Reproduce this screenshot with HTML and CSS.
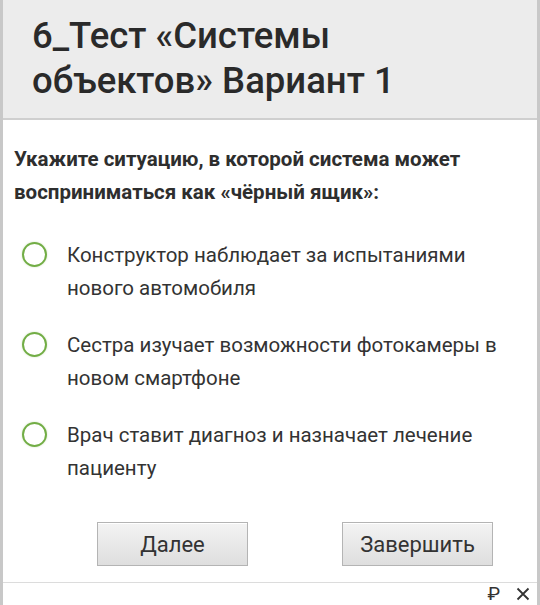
FILE: index.html
```html
<!DOCTYPE html>
<html lang="ru">
<head>
<meta charset="utf-8">
<link rel="stylesheet" href="styles.css">
</head>
<body>
<div class="page">
  <header class="header">
    <h1 class="title">6_Тест «Системы объектов» Вариант 1</h1>
  </header>
  <main class="content">
    <p class="question">Укажите ситуацию, в которой система может восприниматься как «чёрный ящик»:</p>
    <ul class="options">
      <li class="option"><span class="radio"></span><span class="opt-text">Конструктор наблюдает за испытаниями нового автомобиля</span></li>
      <li class="option"><span class="radio"></span><span class="opt-text">Сестра изучает возможности фотокамеры в новом смартфоне</span></li>
      <li class="option"><span class="radio"></span><span class="opt-text">Врач ставит диагноз и назначает лечение пациенту</span></li>
    </ul>
    <div class="buttons">
      <button class="btn">Далее</button>
      <button class="btn">Завершить</button>
    </div>
  </main>
  <footer class="adbar">
    <span class="ad-icon">₽</span>
    <svg class="close" width="14" height="14" viewBox="0 0 14 14"><path d="M1.5 1.5L12.5 12.5M12.5 1.5L1.5 12.5" stroke="#333" stroke-width="1.8" fill="none"/></svg>
  </footer>
</div>
</body>
</html>
```

FILE: styles.css
```css
html, body {
  margin: 0;
  padding: 0;
  background: #fff;
  height: 100%;
  overflow: hidden;
}
.page {
  border-left: 3px solid #c8c8c8;
  border-right: 3px solid #c8c8c8;
  height: 605px;
  box-sizing: border-box;
  font-family: Roboto, "Noto Sans", sans-serif;
  color: #2e2e2e;
  display: flex;
  flex-direction: column;
}
.header {
  background: #ececec;
  border-bottom: 2px solid #cfcfcf;
  height: 120px;
  box-sizing: border-box;
  padding: 13px 20px 0 29px;
}
.title {
  margin: 0;
  font-size: 36.5px;
  font-weight: 500;
  line-height: 45px;
  color: #2a2a2a;
}
.content {
  padding: 23px 11px 0 11px;
  flex: 1;
}
.question {
  margin: 0;
  font-size: 20.5px;
  font-weight: 700;
  line-height: 33px;
  color: #2e2e2e;
}
.options {
  list-style: none;
  margin: 30px 0 0 0;
  padding: 0 10px 0 0;
  display: flex;
  flex-direction: column;
  gap: 24px;
}
.option {
  display: flex;
  align-items: flex-start;
}
.radio {
  flex: none;
  width: 21px;
  height: 21px;
  border: 2.5px solid #72ad45;
  border-radius: 50%;
  margin: 3px 0 0 8px;
  box-shadow: 0 0 2px rgba(114, 173, 69, 0.35);
}
.opt-text {
  margin-left: 20px;
  font-size: 20.5px;
  line-height: 33px;
  color: #333;
}
.buttons {
  display: flex;
  justify-content: space-between;
  padding: 0 33px 0 83px;
  margin-top: 37px;
}
.btn {
  width: 151px;
  height: 44px;
  font-family: Roboto, "Noto Sans", sans-serif;
  font-size: 22px;
  color: #333;
  background: linear-gradient(#f3f3f3, #dedede);
  border: 1.5px solid #b4b4b4;
  border-radius: 0;
  box-shadow: inset 0 1px 0 #fff;
  padding: 0;
}
.adbar {
  border-top: 1px solid #dcdcdc;
  height: 22px;
  display: flex;
  justify-content: flex-end;
  align-items: center;
  gap: 16px;
  padding: 0 7px 0 0;
}
.ad-icon {
  font-family: Roboto, "DejaVu Sans", sans-serif;
  font-size: 19px;
  color: #333;
  line-height: 22px;
}
.close {
  display: block;
}
```
